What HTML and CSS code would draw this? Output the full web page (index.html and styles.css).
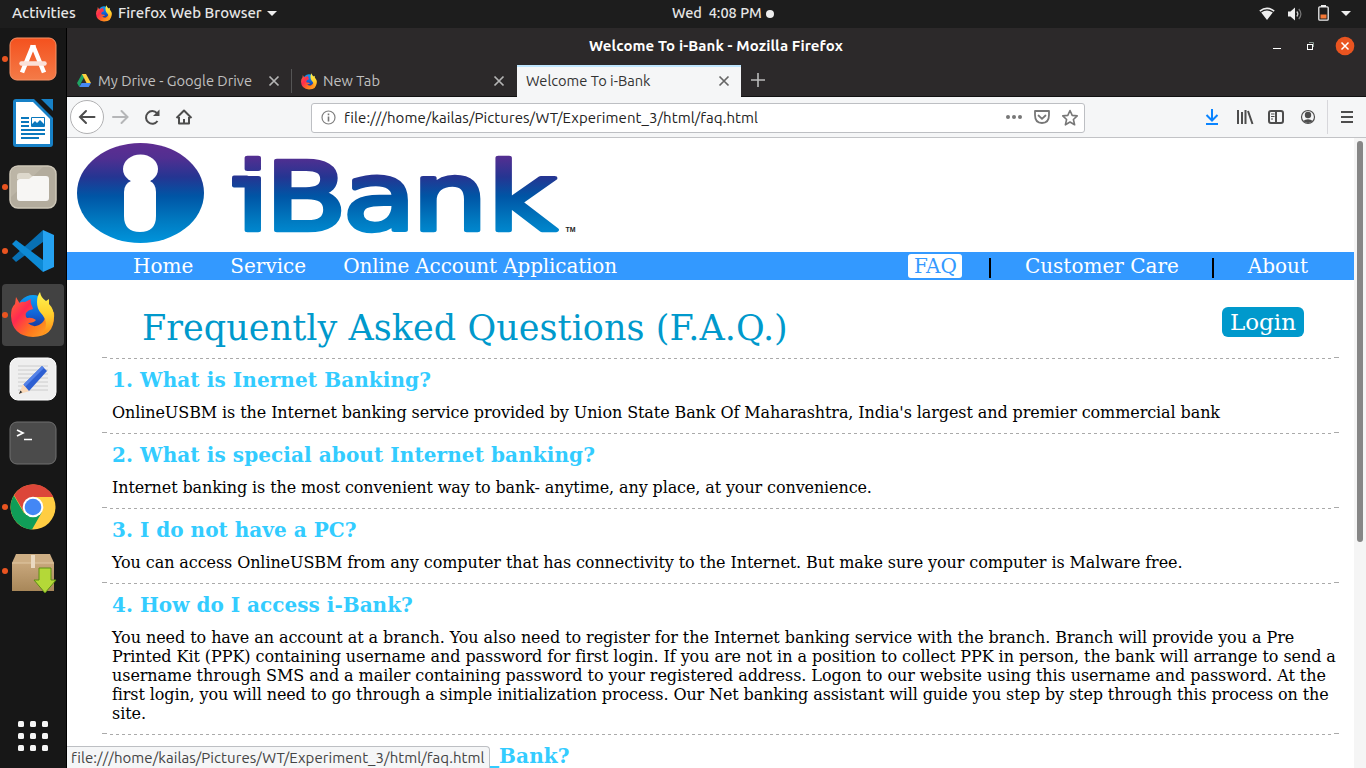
FILE: index.html
```html
<!DOCTYPE html>
<html lang="en">
<head>
<meta charset="utf-8">
<title>Welcome To i-Bank</title>
<link rel="stylesheet" href="styles.css">
</head>
<body>
<svg width="0" height="0" class="defs" aria-hidden="true">
  <defs>
    <linearGradient id="ffRed" x1="0" y1="0.2" x2="1" y2="1"><stop offset="0" stop-color="#ff5a3b"/><stop offset=".25" stop-color="#ff2a50"/><stop offset=".6" stop-color="#ff7a1c"/><stop offset="1" stop-color="#ffb52b"/></linearGradient>
    <linearGradient id="ffYellow" x1="0" y1="0" x2="0" y2="1"><stop offset="0" stop-color="#fff44f"/><stop offset=".5" stop-color="#ffd12e"/><stop offset="1" stop-color="#ff8a16"/></linearGradient>
    <linearGradient id="ffBlue" x1="0" y1="0" x2="0" y2="1"><stop offset="0" stop-color="#0ba0f5"/><stop offset=".6" stop-color="#1262d6"/><stop offset="1" stop-color="#1b3a9c"/></linearGradient>
    <symbol id="firefox" viewBox="0 0 44 46">
      <circle cx="22" cy="19" r="16" fill="url(#ffBlue)"/>
      <path d="M5 5L8.500 11Q11 9 14 10L20 7Q19 11 21 14L22 17Q17 18 15 21Q14 24 16 26Q21 25 25 28Q23 31 17 31Q22 36 28 33Q34 30 34 24L43 20Q45 45 22 45Q1 44 0 24Q0 15 4 12Z" fill="url(#ffRed)"/>
      <path d="M29 0Q30 6 35 9L38 7L38 12Q43 17 43 25Q42 38 31 43Q37 35 34 27Q32 23 29 20Q26 16 26 10Q26 4 29 0Z" fill="url(#ffYellow)"/>
    </symbol>
  </defs>
</svg>
<div class="desktop">
  <header class="topbar">
    <span class="activities">Activities</span>
    <span class="appmenu"><svg width="16" height="17"><use href="#firefox"/></svg><span class="appname">Firefox Web Browser</span><i class="caret"></i></span>
    <span class="clock"><span class="clocktext">Wed&nbsp; 4:08 PM</span><i class="notify"></i></span>
    <span class="tray">
      <svg width="16" height="14" viewBox="0 0 16 14"><path d="M.3 3.5Q8-2.5 15.7 3.5L14.7 4.7Q8-.2 1.3 4.7Z M2.2 5.5Q8 1.4 13.8 5.5L8 13Z" fill="#eee"/></svg>
      <svg width="16" height="14" viewBox="0 0 16 14"><path d="M1 4.5h2.5L8 .5v13L3.5 9.5H1Z" fill="#eee"/><path d="M9.8 4.5q2.2 2.5 0 5" stroke="#ccc" stroke-width="1.2" fill="none"/><path d="M11.8 2q4.2 5 0 10" stroke="#777" stroke-width="1.2" fill="none"/></svg>
      <svg width="11" height="16" viewBox="0 0 11 16"><path d="M3 0h5v2H3Z" fill="#eee"/><rect x=".8" y="1.8" width="9.4" height="13.4" rx="1" fill="none" stroke="#eee" stroke-width="1.3"/><rect x="2.5" y="9.500" width="6" height="4" fill="#f57836"/></svg>
      <i class="caret"></i>
    </span>
  </header>

  <nav class="dock">
    <div class="app open"><svg width="48" height="44" viewBox="0 0 48 44"><defs><linearGradient id="gs" x2="0" y2="1"><stop offset="0" stop-color="#f4511e"/><stop offset="1" stop-color="#f47b48"/></linearGradient></defs><rect x="1" y="1" width="46" height="42" rx="7" fill="url(#gs)" stroke="#fa9367"/><path d="M24 8.500L13 35.500M24 8.500L35 35.500" stroke="#fff" stroke-width="4.500" fill="none"/><path d="M21.500 8h5v5h-5Z" fill="#fff"/><path d="M12.500 26.500h23" stroke="#fbe0d7" stroke-width="4.500" stroke-linecap="round"/></svg></div>
    <div class="app"><svg width="40" height="48" viewBox="0 0 40 48"><path d="M3 0H21L40 19V45a3 3 0 0 1-3 3H3a3 3 0 0 1-3-3V3a3 3 0 0 1 3-3Z" fill="#1781c7"/><path d="M28 0h12v12Z" fill="#1781c7"/><path d="M3 3H20L37 20V45H3Z" fill="#fff"/><path d="M8 19h8M8 23h8M8 27h8M8 31h24M8 35h24M8 39h18" stroke="#0a78bd" stroke-width="2"/><path d="M18.500 18.500h13v9h-13Z" fill="#fff" stroke="#0a78bd"/><path d="M19 27v-2l3-3 2 2 3-3 4 4v2Z" fill="#0a78bd"/></svg></div>
    <div class="app open"><svg width="48" height="44" viewBox="0 0 48 44"><rect x="1" y="1" width="46" height="42" rx="8" fill="#b3ac9d" stroke="#cec7b8" stroke-width="1.500"/><path d="M2 32L34 2H9Q2 2 2 9Z" fill="#bcb5a6"/><path d="M8 14v-3q0-3 3-3h9l3 3h12l2 3Z" fill="#ddd8cc"/><path d="M8 17q0-3 3-3h9l4-3h13q3 0 3 3v19q0 3-3 3H11q-3 0-3-3Z" fill="#f7f6f4"/></svg></div>
    <div class="app open"><svg width="42" height="42" viewBox="0 0 42 42"><path d="M31 0L0 28 4 32 31 12Z" fill="#0870b4"/><path d="M4 10L0 14 31 42V30Z" fill="#0d8ad5"/><path d="M31 0L42 5V37L31 42Z" fill="#25a2f1"/></svg></div>
    <div class="app open active"><svg width="44" height="46"><use href="#firefox"/></svg></div>
    <div class="app"><svg width="48" height="44" viewBox="0 0 48 44"><rect x="1" y="1" width="46" height="42" rx="8" fill="#efefef" stroke="#fff"/><path d="M9 9h30M9 13h30M9 17h30M9 21h30M9 25h30M9 29h30M9 33h30" stroke="#ccc"/><path d="M10 37l4-10 7 7Z" fill="#f8d8b8"/><path d="M10 37l1.300-3.500 2 1.700Z" fill="#333"/><path d="M14.500 27.500L33 9l5 5L20 34Z" fill="#2d5fd2"/><path d="M14.500 27.500L33 9l2 2-18.500 18.500Z" fill="#5482e8"/></svg></div>
    <div class="app"><svg width="48" height="44" viewBox="0 0 48 44"><rect x="1" y="1" width="46" height="42" rx="7" fill="#4b4b4b" stroke="#707070"/><path d="M8 9l6 3-6 3M15 18.500h8" fill="none" stroke="#fff" stroke-width="1.700"/></svg></div>
    <div class="app open"><svg width="46" height="46" viewBox="0 0 46 46"><circle cx="23" cy="23" r="22.500" fill="#ffcd42"/><path d="M4 11A22.500 22.500 0 0 1 43.500 13H23L14 28Z" fill="#dc4639"/><path d="M3.800 11.500L14 29 23 33 32 28 22 45.500A22.500 22.500 0 0 1 3.800 11.500Z" fill="#109d58"/><circle cx="23" cy="23" r="10.300" fill="#fff"/><circle cx="23" cy="23" r="8.300" fill="#4387f5"/></svg></div>
    <div class="app open"><svg width="48" height="44" viewBox="0 0 48 44"><defs><linearGradient id="bx" x2="0" y2="1"><stop offset="0" stop-color="#c8a77c"/><stop offset="1" stop-color="#a88759"/></linearGradient></defs><path d="M7 5H41L45 14H3Z" fill="#cdae84"/><rect x="3" y="14" width="42" height="28" fill="url(#bx)"/><path d="M3 14h42" stroke="#dfc7a3"/><path d="M22 6h4v13h-4Z" fill="#ead9c1"/></svg><svg class="arrow" width="24" height="27" viewBox="0 0 24 27"><path d="M6 1h12v12h5L12 26 1 13h5Z" fill="#b4d838" stroke="#5c8e14"/></svg></div>
    <div class="grid"><i></i><i></i><i></i><i></i><i></i><i></i><i></i><i></i><i></i></div>
  </nav>

  <section class="window">
    <div class="titlebar">
      <span class="wintitle">Welcome To i-Bank - Mozilla Firefox</span>
      <div class="winctl"><svg width="84" height="20" viewBox="0 0 84 20"><path d="M1 12.500h8" stroke="#fff"/><path d="M37 6.500h4.500V11" fill="none" stroke="#87968f"/><rect x="35.500" y="8.500" width="5" height="5" fill="none" stroke="#fff"/><circle cx="73" cy="10" r="9.300" fill="#e95420"/><path d="M69.500 6.500l7 7m0-7l-7 7" stroke="#fff" stroke-width="1.500"/></svg></div>
    </div>
    <div class="tabs">
      <div class="tab first"><svg width="14" height="14" viewBox="0 0 14 14"><path d="M5 0h4L4.500 8 2.300 13 0 9Z" fill="#1fa463"/><path d="M5 0h4l5 9H9.500Z" fill="#ffcf3f"/><path d="M2.300 13L4.600 9H14l-2.300 4Z" fill="#4688f4"/></svg><span class="t1">My Drive - Google Drive</span><svg class="x" width="12" height="12" viewBox="0 0 12 12"><path d="M1.500 1.500l9 9m0-9l-9 9"/></svg></div>
      <div class="tab second"><svg width="16" height="17"><use href="#firefox"/></svg><span class="t2">New Tab</span><svg class="x" width="12" height="12" viewBox="0 0 12 12"><path d="M1.500 1.500l9 9m0-9l-9 9"/></svg></div>
      <div class="tab current"><span class="t3">Welcome To i-Bank</span><svg class="x" width="12" height="12" viewBox="0 0 12 12"><path d="M1.500 1.500l9 9m0-9l-9 9"/></svg></div>
      <svg class="plus" width="14" height="14" viewBox="0 0 14 14"><path d="M7 0v14M0 7h14" stroke="#bbb" stroke-width="1.600"/></svg>
    </div>
    <div class="toolbar">
      <svg class="navicons" width="130" height="40" viewBox="0 0 130 40" fill="none" stroke="#4d4d4d" stroke-width="2">
        <circle cx="20" cy="20" r="16.500" fill="#fff" stroke="#b1b1b3" stroke-width="1"/>
        <path d="M27.500 20H13M19 14L13 20 19 26" stroke-linecap="round"/>
        <path d="M46 20H60M54.500 14L60.500 20 54.500 26" stroke="#b5b6b8" stroke-linecap="round"/>
        <path d="M90 16.200A6.300 6.300 0 1 0 90.500 24"/><path d="M92.500 12.500v6.500h-6.500Z" fill="#4d4d4d" stroke="none"/>
        <path d="M109.500 21L117 13.500 124.500 21M112 20v6.500h10V20M117 22v5" stroke-linejoin="round"/>
      </svg>
      <div class="url">
        <svg width="15" height="15" viewBox="0 0 15 15"><circle cx="7.500" cy="7.500" r="6.500" fill="none" stroke="#808080" stroke-width="1.200"/><path d="M7.500 6.500v5M7.500 3.500v1.700" stroke="#777" stroke-width="1.600"/></svg>
        <span class="address">file:///home/kailas/Pictures/WT/Experiment_3/html/faq.html</span>
        <svg class="urlicons" width="74" height="18" viewBox="0 0 74 18" fill="none" stroke="#777" stroke-width="1.800"><g fill="#777" stroke="none"><circle cx="4" cy="8" r="2"/><circle cx="10" cy="8" r="2"/><circle cx="16" cy="8" r="2"/></g><path d="M31 2h14v4q0 8-7 8t-7-8Z" stroke-linejoin="round"/><path d="M34.500 6.500L38 9.800 41.500 6.500" stroke-linecap="round"/><path d="M66 1.500l2.200 4.900 5 .5-3.800 3.600 1.200 5.300-4.600-2.800-4.600 2.800 1.200-5.300-3.800-3.600 5-.5Z" stroke-linejoin="round" stroke-width="1.600"/></svg>
      </div>
      <svg class="tools" width="160" height="40" viewBox="0 0 160 40" fill="none" stroke="#4d4d4d" stroke-width="2">
        <path d="M12 12v11M6.500 18L12 23.500 17.500 18M6 27h12" stroke="#0a84ff"/>
        <path d="M38 13v14M42 15v12M45.500 13v14M48 14l4.500 13"/>
        <rect x="69" y="14" width="14" height="12" rx="2"/><path d="M76 14v12"/><path d="M71 17h3.500M71 19.500h3.500M71 22h2" stroke-width="1"/>
        <circle cx="108" cy="20" r="6.500" stroke-width="1.200"/><circle cx="108" cy="18" r="3.200" fill="#4d4d4d" stroke="none"/><path d="M103 24q5-3.500 10 0-5 4-10 0Z" fill="#4d4d4d" stroke="none"/>
        <path d="M127.500 3v34" stroke="#d7d7db" stroke-width="1"/>
        <path d="M141 15h12M141 20h12M141 25h12"/>
      </svg>
    </div>
    <main class="viewport">
      <div class="page">
        <div class="logo">
          <svg width="500" height="101" viewBox="0 0 500 101">
            <defs><linearGradient id="brand" gradientUnits="userSpaceOnUse" x1="0" y1="0" x2="0" y2="100"><stop offset="0" stop-color="#5f2d91"/><stop offset=".15" stop-color="#512f91"/><stop offset=".34" stop-color="#253592"/><stop offset=".53" stop-color="#0055a5"/><stop offset=".78" stop-color="#007ac1"/><stop offset="1" stop-color="#0095dc"/></linearGradient></defs>
            <ellipse cx="63.500" cy="50" rx="63.500" ry="50" fill="url(#brand)"/>
            <ellipse cx="63.500" cy="26" rx="17.500" ry="14.500" fill="#fff"/>
            <path d="M54 38h19q6 3 6 11v24q0 16-16 16t-16-16V49q0-8 7-11Z" fill="#fff"/>
            <text class="brand" y="86.500" x="125.800 148.800 210.200 265 324.500" transform="scale(1.265 1)" fill="url(#brand)" stroke="url(#brand)">iBank</text>
            <rect x="155" y="32.500" width="17" height="12" rx="2" fill="url(#brand)"/>
            <text class="tm" x="488.500" y="89" textLength="10" lengthAdjust="spacingAndGlyphs">TM</text>
          </svg>
        </div>
        <div class="menu">
          <a class="m1">Home</a><a class="m2">Service</a><a class="m3">Online Account Application</a>
          <span class="right"><a class="faqlink">FAQ</a><b class="bar"></b><a>Customer Care</a><b class="bar"></b><a>About</a></span>
        </div>
        <div class="heading"><h1>Frequently Asked Questions (F.A.Q.)</h1><a class="login">Login</a></div>
        <div class="faqs">
          <article><h2>1. What is Inernet Banking?</h2><p>OnlineUSBM is the Internet banking service provided by Union State Bank Of Maharashtra, India's largest and premier commercial bank</p></article>
          <article><h2>2. What is special about Internet banking?</h2><p class="tight">Internet banking is the most convenient way to bank- anytime, any place, at your convenience.</p></article>
          <article><h2 class="plain">3. I do not have a PC?</h2><p>You can access OnlineUSBM from any computer that has connectivity to the Internet. But make sure your computer is Malware free.</p></article>
          <article><h2 class="plain">4. How do I access i-Bank?</h2><p class="loose">You need to have an account at a branch. You also need to register for the Internet banking service with the branch. Branch will provide you a Pre<br>Printed Kit (PPK) containing username and password for first login. If you are not in a position to collect PPK in person, the bank will arrange to send a<br>username through SMS and a mailer containing password to your registered address. Logon to our website using this username and password. At the<br><span class="tight">first login, you will need to go through a simple initialization process. Our Net banking assistant will guide you step by step through this process on the</span><br>site.</p></article>
          <article class="last"><h2>_Bank?</h2></article>
        </div>
      </div>
      <div class="scroll"><i></i></div>
      <div class="status"><span>file:///home/kailas/Pictures/WT/Experiment_3/html/faq.html</span></div>
    </main>
  </section>
</div>
</body>
</html>
```
FILE: styles.css
```css
* { box-sizing: border-box; }
body { margin: 0; font-family: Ubuntu, "Noto Sans", "Open Sans", sans-serif; font-size: 15px; overflow: hidden; }
svg { display: block; flex: none; }
.defs { position: absolute; }
.desktop { width: 1366px; height: 768px; display: grid; grid-template: 28px 740px / 67px 1299px; background: #171717; }
span { white-space: nowrap; }

.topbar { grid-column: 1 / 3; background: #1d1d1d; color: #e6e6e6; display: grid; grid-template-columns: 96px 576px 1fr auto; align-items: center; font-weight: 500; line-height: 27px; padding: 0 15px 1px 0; height: 28px; }
.activities { padding-left: 12px; }
.appmenu, .clock, .tray { display: flex; align-items: center; height: 27px; }
.activities, .appname, .clocktext { line-height: 25px; height: 27px; }
.appname { margin: 0 5px 0 6px; }
.clocktext { font-size: 14.5px; }
.caret { width: 0; height: 0; border: 5px solid transparent; border-top-color: #eee; border-bottom: 0; }
.notify { width: 8px; height: 8px; border-radius: 50%; background: #eee; margin-left: 4px; }
.tray { gap: 12px; }
.tray svg:nth-child(3) { margin: 0 0 2px 3px; }

.dock { display: flex; flex-direction: column; border-right: 1px solid #000; }
.app { height: 62px; width: 62px; margin: 0 0 2px 2px; display: flex; align-items: center; justify-content: center; position: relative; border-radius: 4px; }
.app.active { background: #424242; }
.app.open::before { content: ""; position: absolute; left: 0; top: 28px; width: 6px; height: 6px; border-radius: 50%; background: #e95420; }
.arrow { position: absolute; left: 31px; top: 27px; }
.grid { display: grid; grid-template-columns: repeat(3, 6px); grid-auto-rows: 6px; gap: 6px; margin: 117px 0 0 18px; }
.grid i { background: #f5f5f5; border-radius: 1.5px; }

.window { display: flex; flex-direction: column; background: #2c292a; overflow: hidden; }
.titlebar { height: 37px; display: flex; align-items: center; color: #fff; font-weight: 700; padding: 0 0 1px 522px; letter-spacing: .11px; }
.wintitle { padding-bottom: 2px; }
.winctl { margin-left: auto; padding-right: 10px; }
.tabs { height: 32px; display: flex; border-bottom: 1px solid #111; color: #c0c0c0; font-size: 14.67px; }
.tab { display: flex; align-items: center; height: 32px; padding: 0 11px 0 10px; }
.tab span { padding-bottom: 2px; }
.tab .x { margin-left: auto; fill: none; stroke: #b5b5b5; stroke-width: 1.7; }
.first { width: 224px; }
.first span { margin-left: 7px; }
.second { width: 226px; border-left: 1px solid #555; height: 24px; margin-top: 4px; padding-left: 9px; padding-right: 12px; }
.second span { margin-left: 6px; }
.current { width: 224px; background: #f5f6f7; border-top: 2px solid #bfe6ff; color: #333; padding: 0 11px 2px 9px; }
.current .x { stroke: #666; }
.plus { margin: 8px 0 0 10px; }
.toolbar { height: 41px; background: #f5f6f7; border-bottom: 1px solid #c2c3c6; display: flex; align-items: center; }
.url { width: 774px; height: 30px; margin: 1px 0 0 114px; background: #fff; border: 1px solid #bdbfc3; border-radius: 3px; display: flex; align-items: center; padding: 0 6px 0 9px; color: #222; }
.address { margin-left: 8px; letter-spacing: .07px; }
.urlicons { margin-left: auto; }
.tools { margin-left: 115px; }

.viewport { flex: 1; background: #fff; display: flex; position: relative; min-height: 0; font-family: "DejaVu Serif", serif; }
.page { width: 1287px; overflow: hidden; }
.scroll { width: 12px; background: #f5f5f5; padding: 3px; }
.scroll i { display: block; width: 6px; height: 401px; background: #868686; border-radius: 3px; }
.logo { height: 114px; padding: 5px 0 0 10px; }
.logo svg { overflow: visible; }
.brand { font: 400 94px "DejaVu Sans", sans-serif; stroke-width: 4.500px; stroke-linejoin: round; }
.tm { font: 700 6.5px "Liberation Sans", sans-serif; fill: #222; }
.menu { height: 28px; background: #39f; color: #fff; font-size: 20px; display: flex; align-items: center; padding: 0 46px 0 66px; white-space: nowrap; }
.menu .m1, .menu .m2 { margin-right: 37px; }
.menu .m3 { letter-spacing: -.14px; }
.right { margin-left: auto; display: flex; align-items: center; }
.faqlink { background: #fff; color: #39f; border-radius: 3px; padding: 0 5px 0 6px; line-height: 24px; }
.bar { width: 2px; height: 20px; background: #000; margin: 4px 34px 0 33px; }
.faqlink + .bar { margin-left: 27px; }
.heading { height: 77px; display: flex; justify-content: space-between; padding: 27px 50px 0 75px; }
h1 { margin: 0; font-size: 35px; font-weight: 400; line-height: 43px; color: #09c; white-space: nowrap; letter-spacing: .04px; }
.login { background: #09c; color: #fff; height: 30px; border-radius: 6px; font-size: 23px; line-height: 31px; padding: 0 8px; }
.faqs { padding: 0 15px 0 35px; }
article { padding: 10px 0 10px 10px; background: linear-gradient(#aaa, #aaa) 0 0 / 5px 1px no-repeat, linear-gradient(#aaa, #aaa) 100% 0 / 5px 1px no-repeat, repeating-linear-gradient(90deg, #aaa 0 3px, transparent 3px 6px) 8px 1px / 1221px 1px no-repeat; white-space: nowrap; }
h2 { margin: 0; font-size: 20px; line-height: 27px; color: #3cf; height: 36px; letter-spacing: .09px; }
h2.plain { letter-spacing: .02px; }
p { margin: 0; font-size: 16px; line-height: 19px; color: #000; letter-spacing: -.093px; }
p.loose { letter-spacing: -.065px; }
.tight { letter-spacing: -.114px; }
.last { height: 50px; }
.last h2 { margin-left: 377px; }
.status { position: absolute; left: 0; bottom: 0; height: 22px; width: 423px; background: #f5f6f7; border: 1px solid #bdbfc3; border-width: 1px 1px 0 0; border-radius: 0 4px 0 0; padding-left: 4px; line-height: 22px; color: #444; font-family: Ubuntu, "Noto Sans", sans-serif; letter-spacing: .06px; }
```
